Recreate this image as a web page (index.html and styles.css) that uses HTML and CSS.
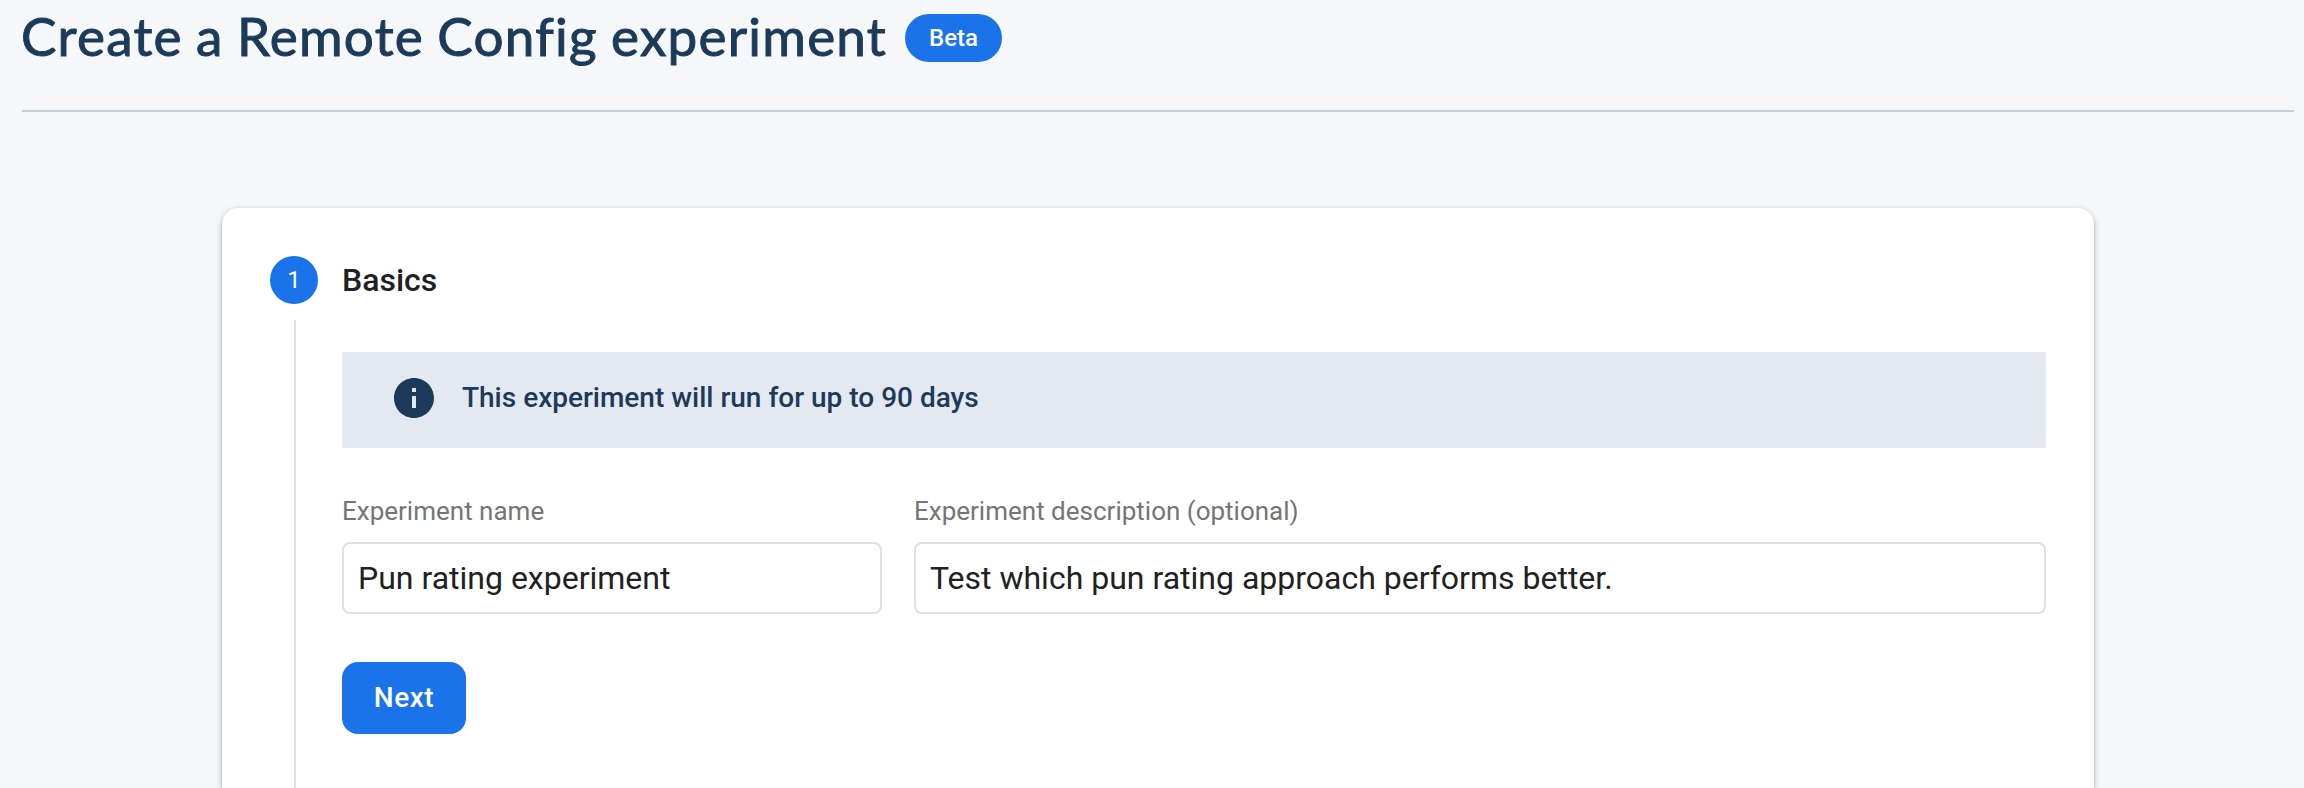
FILE: index.html
```html
<!DOCTYPE html>
<html lang="en">
<head>
<meta charset="utf-8">
<title>Create a Remote Config experiment</title>
<link rel="stylesheet" href="styles.css">
</head>
<body>
<header class="page-header">
  <h1 class="page-title">Create a Remote Config experiment</h1>
  <span class="badge">Beta</span>
</header>
<main class="card">
  <div class="step-rail">
    <span class="step-number">1</span>
    <span class="step-line"></span>
  </div>
  <section class="step-content">
    <h2 class="step-title">Basics</h2>
    <div class="banner">
      <svg class="banner-icon" viewBox="2 2 20 20" aria-hidden="true"><path fill="currentColor" d="M12 2C6.480 2 2 6.480 2 12s4.480 10 10 10 10-4.480 10-10S17.520 2 12 2zm1 15h-2v-6h2v6zm0-8h-2V7h2v2z"/></svg>
      <span class="banner-text">This experiment will run for up to 90 days</span>
    </div>
    <form class="form">
      <div class="fields">
        <label class="field"><span class="label">Experiment name</span>
          <input class="input" type="text" value="Pun rating experiment"></label>
        <label class="field"><span class="label">Experiment description (optional)</span>
          <input class="input" type="text" value="Test which pun rating approach performs better."></label>
      </div>
      <button class="button" type="button">Next</button>
    </form>
  </section>
</main>
</body>
</html>
```
FILE: styles.css
```css
* { box-sizing: border-box; }

body {
  margin: 0;
  height: 788px;
  overflow: hidden;
  background: #f6f7f9;
  color: #212121;
  font-family: Roboto, sans-serif;
}

.page-header {
  display: flex;
  align-items: flex-start;
  height: 112px;
  margin: 0 10px 0 22px;
  border-bottom: 2px solid #c3cfdd;
}

.page-title {
  width: 884px;
  margin: 4px 0 0 -1px;
  color: #1c3a5a;
  font: 400 53px/64px Lato, sans-serif;
  letter-spacing: 1.25px;
  word-spacing: -1.5px;
  white-space: nowrap;
  -webkit-text-stroke: 1px #1c3a5a;
}

.badge {
  width: 97px;
  height: 48px;
  margin-top: 14px;
  border-radius: 24px;
  background: #1a73e8;
  color: #fff;
  font-size: 24px;
  font-weight: 500;
  line-height: 48px;
  text-align: center;
}

.card {
  display: flex;
  gap: 24px;
  width: 1872px;
  height: 580px;
  margin: 96px 0 0 222px;
  padding: 48px 48px 0;
  border-radius: 16px 16px 0 0;
  background: #fff;
  box-shadow: 0 2px 2px rgba(0, 0, 0, .2), 0 2px 6px rgba(0, 0, 0, .26);
}

.step-rail {
  display: flex;
  flex-direction: column;
  align-items: center;
  gap: 16px;
  width: 48px;
}

.step-number {
  width: 48px;
  height: 48px;
  border-radius: 50%;
  background: #1a73e8;
  color: #fff;
  font-size: 24px;
  line-height: 48px;
  text-align: center;
}

.step-line {
  flex: 1;
  width: 2px;
  margin-left: 2px;
  background: #e0e0e0;
}

.step-content { flex: 1; }

.step-title {
  margin: 0;
  font-size: 32px;
  font-weight: 500;
  line-height: 48px;
}

.banner {
  display: flex;
  align-items: center;
  gap: 28px;
  height: 96px;
  margin-top: 48px;
  padding: 0 52px 4px;
  background: #e4e9f1;
  color: #1c3a5a;
}

.banner-icon {
  width: 40px;
  height: 40px;
}

.banner-text {
  padding-bottom: 2px;
  font-size: 28px;
  font-weight: 500;
}

.fields {
  display: grid;
  grid-template-columns: 540px 1fr;
  gap: 32px;
  margin-top: 44px;
}

.field {
  display: flex;
  flex-direction: column;
  gap: 12px;
}

.label {
  color: #757575;
  font-size: 26px;
  line-height: 38px;
}

.input {
  width: 100%;
  height: 72px;
  padding: 0 14px;
  border: 2px solid #e0e0e0;
  border-radius: 8px;
  background: #fff;
  color: #212121;
  font: 400 32px Roboto, sans-serif;
}

.button {
  width: 124px;
  height: 72px;
  margin-top: 48px;
  padding: 0 0 2px;
  border: 0;
  border-radius: 16px;
  background: #1a73e8;
  color: #fff;
  font: 500 28px Roboto, sans-serif;
  letter-spacing: .5px;
}
```
